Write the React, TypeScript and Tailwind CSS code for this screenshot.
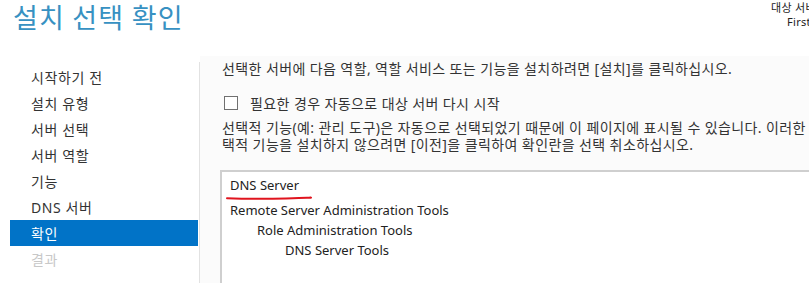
const navItems = [
  "시작하기 전",
  "설치 유형",
  "서버 선택",
  "서버 역할",
  "기능",
  "DNS 서버",
  "확인",
  "결과",
];

const font = "font-['Noto_Sans','Noto_Sans_CJK_KR',sans-serif]";

export default function App() {
  return (
    <div className={`relative w-[809px] h-[283px] overflow-hidden bg-white text-[#333333] ${font}`}>
      {/* header */}
      <div className="flex h-[56px] items-start justify-between">
        <h1 className="pl-[13px] text-[27px] leading-[34px] tracking-[1.2px] text-[#3791c2] font-['Noto_Sans_CJK_KR',sans-serif]">
          설치 선택 확인
        </h1>
        <div className="ml-auto w-[38px] overflow-hidden whitespace-nowrap pt-[1px] text-[11px] leading-[14px] tracking-[0.3px] text-[#222]">
          <div>대상 서버</div>
          <div className="pl-[16px]">FirstServer</div>
        </div>
      </div>

      <div className="flex h-[227px]">
        {/* left nav */}
        <nav className="mt-[6px] w-[200px] shrink-0 border-r border-[#e2e2e2] pt-[2px] text-[14px] tracking-[0.6px]">
          {navItems.map((item) => {
            const selected = item === "확인";
            const disabled = item === "결과";
            return (
              <div
                key={item}
                className={`ml-[10px] mr-[1px] flex h-[26px] items-center pl-[21px] ${
                  selected
                    ? "bg-[#0173c7] text-white"
                    : disabled
                      ? "text-[#c8c8c8]"
                      : "text-[#333333]"
                }`}
              >
                {item}
              </div>
            );
          })}
        </nav>

        {/* content */}
        <div className="flex-1 bg-[#fbfbfb] pl-[20px] pt-[3px] text-[14px] tracking-[0.4px]">
          <p className="pl-[2px] leading-[20px] whitespace-nowrap">
            선택한 서버에 다음 역할, 역할 서비스 또는 기능을 설치하려면 [설치]를 클릭하십시오.
          </p>
          <label className="mt-[14px] flex h-[20px] items-center pl-[4px] whitespace-nowrap">
            <span className="h-[14px] w-[14px] border border-[#707070] bg-white" />
            <span className="ml-[12px]">필요한 경우 자동으로 대상 서버 다시 시작</span>
          </label>
          <p className="mt-[6px] pl-[2px] leading-[17px] whitespace-nowrap">
            선택적 기능(예: 관리 도구)은 자동으로 선택되었기 때문에 이 페이지에 표시될 수 있습니다. 이러한 선
            <br />
            택적 기능을 설치하지 않으려면 [이전]을 클릭하여 확인란을 선택 취소하십시오.
          </p>

          <div className="mt-[17px] h-[140px] w-[620px] border-l-2 border-t-2 border-[#cfcfcf] bg-white pl-[8px] pt-[3px] text-[13px] leading-[20px] tracking-normal text-[#222]">
            <div className="relative mb-[5px] w-fit">
              DNS Server
              <svg
                className="absolute left-[-4px] top-[20px]"
                width="86"
                height="6"
                viewBox="0 0 86 6"
              >
                <path
                  d="M1 3.2 Q 30 4.2 60 3.4 T 84 2.6"
                  stroke="#e0141e"
                  strokeWidth="2"
                  fill="none"
                  strokeLinecap="round"
                />
              </svg>
            </div>
            <div>Remote Server Administration Tools</div>
            <div className="pl-[27px]">Role Administration Tools</div>
            <div className="pl-[55px] leading-[21px]">DNS Server Tools</div>
          </div>
        </div>
      </div>
    </div>
  );
}
